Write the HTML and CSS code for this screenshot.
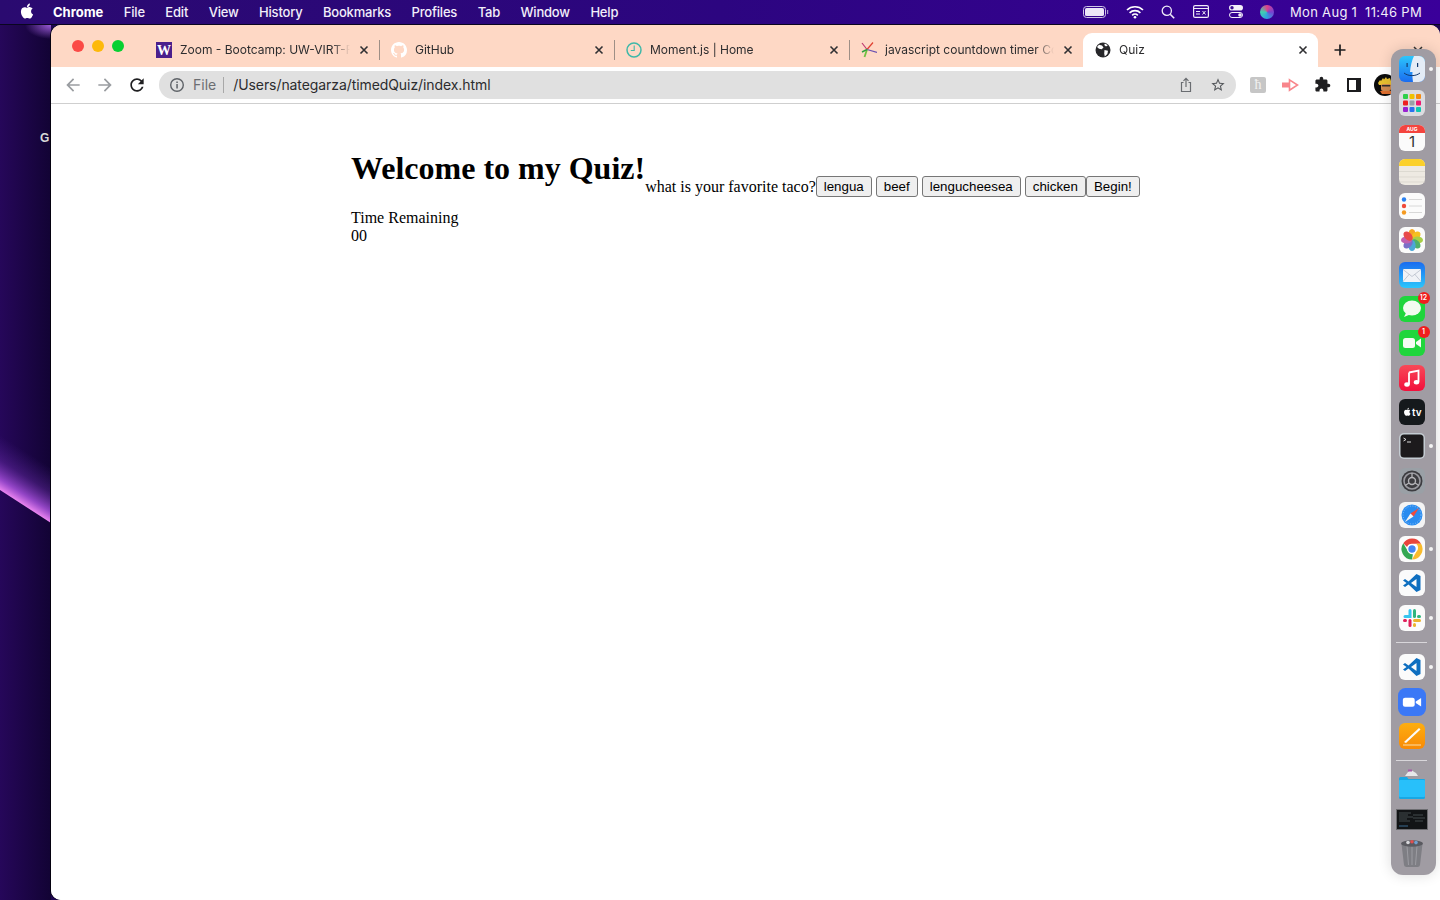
FILE: index.html
```html
<!DOCTYPE html>
<html>
<head>
  <title>Quiz</title>
  <link rel="stylesheet" href="styles.css">
</head>
<body>

  <header class="menubar">
    <svg class="apple" viewBox="0 0 24 24"><path fill="#fff" d="M18.71 19.5c-.83 1.24-1.71 2.45-3.05 2.47-1.34.03-1.77-.79-3.29-.79-1.53 0-2 .77-3.27.82-1.31.05-2.3-1.32-3.14-2.53C4.25 17 2.94 12.45 4.7 9.39c.87-1.52 2.43-2.48 4.12-2.51 1.28-.02 2.5.87 3.29.87.78 0 2.26-1.07 3.81-.91.65.03 2.47.26 3.64 1.98-.09.06-2.17 1.28-2.15 3.81.03 3.02 2.65 4.03 2.68 4.04-.03.07-.42 1.44-1.38 2.83M13 3.5c.73-.83 1.94-1.46 2.94-1.5.13 1.17-.34 2.35-1.04 3.19-.69.85-1.83 1.51-2.95 1.42-.15-1.15.41-2.35 1.05-3.11z"/></svg>
    <nav class="menus">
      <span class="app-name">Chrome</span>
      <span>File</span>
      <span>Edit</span>
      <span>View</span>
      <span>History</span>
      <span>Bookmarks</span>
      <span>Profiles</span>
      <span>Tab</span>
      <span>Window</span>
      <span>Help</span>
    </nav>
    <div class="status">
      <svg class="st-battery" width="26" height="12" viewBox="0 0 26 12"><rect x=".5" y=".5" width="22" height="11" rx="3" fill="none" stroke="#cfc6e6"/><rect x="2" y="2" width="19" height="8" rx="1.6" fill="#ece6f8"/><rect x="24" y="4" width="1.2" height="4" fill="#a99bd0"/></svg>
      <svg class="st-wifi" width="18" height="14" viewBox="0 0 18 14"><path d="M1 5a11.5 11.5 0 0 1 16 0M3.6 7.800a7.800 7.800 0 0 1 10.800 0M6.200 10.300a4 4 0 0 1 5.600 0" fill="none" stroke="#fff" stroke-width="1.7"/><circle cx="9" cy="12.300" r="1.300" fill="#fff"/></svg>
      <svg class="st-search" width="14" height="14" viewBox="0 0 14 14"><circle cx="5.800" cy="5.800" r="4.600" fill="none" stroke="#f0ecf8" stroke-width="1.3"/><path d="M9.200 9.200l4 4" stroke="#f0ecf8" stroke-width="1.6"/></svg>
      <svg class="st-display" width="16" height="13" viewBox="0 0 16 13"><rect x=".6" y=".6" width="14.800" height="11.800" rx="1.5" fill="none" stroke="#f0ecf8" stroke-width="1.2"/><path d="M1 3.500h14" stroke="#f0ecf8"/><path d="M3 6.500h4M3 9h4M9.500 6l3 3.500M12.500 6l-3 3.500" stroke="#f0ecf8"/></svg>
      <svg class="st-control" width="14" height="13" viewBox="0 0 14 13"><rect x="0" y="0" width="14" height="5.600" rx="2.800" fill="#f4f0fa"/><circle cx="3" cy="2.800" r="1.700" fill="#3a0a90"/><rect x=".5" y="7.500" width="13" height="5" rx="2.5" fill="none" stroke="#f4f0fa"/><circle cx="11" cy="10" r="1.800" fill="#f4f0fa"/></svg>
      <span class="st-siri"></span>
      <span class="clock">Mon Aug 1&nbsp;&nbsp;11:46 PM</span>
    </div>
  </header>

  <div class="desktop">
    <aside class="wallpaper">
      <svg width="51" height="875" viewBox="0 0 51 875">
        <defs>
          <linearGradient id="streak" gradientUnits="userSpaceOnUse" x1="25" y1="481" x2="50" y2="442">
            <stop offset="0" stop-color="#ea84f0"/>
            <stop offset="0.2" stop-color="#a850dc" stop-opacity="0.85"/>
            <stop offset="0.55" stop-color="#7030b0" stop-opacity="0.4"/>
            <stop offset="1" stop-color="#5a2aa0" stop-opacity="0"/>
          </linearGradient>
          <radialGradient id="corner" cx="1" cy="0" r="1">
            <stop offset="0" stop-color="#9a5ad8"/>
            <stop offset="1" stop-color="#9a5ad8" stop-opacity="0"/>
          </radialGradient>
        </defs>
        <rect x="25" y="0" width="26" height="14" fill="url(#corner)"/>
        <polygon points="0,400 51,430 51,498 0,465" fill="url(#streak)"/>
        <text class="desk-label" x="40" y="117">G</text>
      </svg>
    </aside>

    <div class="window">
      <div class="tabstrip">
        <div class="lights">
          <span class="light red"></span>
          <span class="light yellow"></span>
          <span class="light green"></span>
        </div>

        <div class="tab">
          <svg class="favicon" viewBox="0 0 16 16"><rect width="16" height="16" fill="#4b1f8c"/><text class="fav-w" x="8" y="13">W</text></svg>
          <span class="tab-title">Zoom - Bootcamp: UW-VIRT-F</span>
          <svg class="tab-close" viewBox="0 0 12 12"><path d="M2.500 2.500l7 7M9.500 2.500l-7 7"/></svg>
        </div>
        <span class="tab-sep"></span>
        <div class="tab">
          <svg class="favicon" viewBox="0 0 16 16"><path fill="#fff" d="M8 0C3.580 0 0 3.580 0 8c0 3.540 2.290 6.530 5.470 7.590.4.070.55-.17.55-.38 0-.19-.01-.82-.01-1.490-2.010.37-2.530-.49-2.690-.94-.09-.23-.48-.94-.82-1.130-.28-.15-.68-.52-.01-.53.63-.01 1.080.58 1.230.82.72 1.210 1.870.87 2.330.66.07-.52.28-.87.51-1.070-1.780-.2-3.640-.89-3.640-3.950 0-.87.31-1.590.82-2.150-.08-.2-.36-1.020.08-2.120 0 0 .67-.21 2.200.82.64-.18 1.320-.27 2-.27.68 0 1.360.09 2 .27 1.530-1.040 2.200-.82 2.200-.82.44 1.100.16 1.920.08 2.120.51.56.82 1.270.82 2.150 0 3.070-1.870 3.750-3.650 3.950.29.25.54.73.54 1.480 0 1.070-.01 1.930-.01 2.200 0 .21.15.46.55.38A8.013 8.013 0 0016 8c0-4.420-3.580-8-8-8z"/></svg>
          <span class="tab-title">GitHub</span>
          <svg class="tab-close" viewBox="0 0 12 12"><path d="M2.500 2.500l7 7M9.500 2.500l-7 7"/></svg>
        </div>
        <span class="tab-sep"></span>
        <div class="tab">
          <svg class="favicon" viewBox="0 0 16 16"><circle cx="8" cy="8" r="7" fill="none" stroke="#3fb8a8" stroke-width="1.5"/><path d="M8.200 3.500v5H4.800" fill="none" stroke="#3fb8a8" stroke-width="1.1"/></svg>
          <span class="tab-title">Moment.js | Home</span>
          <svg class="tab-close" viewBox="0 0 12 12"><path d="M2.500 2.500l7 7M9.500 2.500l-7 7"/></svg>
        </div>
        <span class="tab-sep"></span>
        <div class="tab tab-narrow">
          <svg class="favicon" viewBox="0 0 16 16"><path d="M6 7.500L1 1" stroke="#c03a70" stroke-width="1.2"/><path d="M6 7.500L12 0.500" stroke="#e04030" stroke-width="1.2"/><path d="M6 7.500L16 10.500" stroke="#6a50b0" stroke-width="1.2"/><path d="M6 7.500L3.500 15" stroke="#70c040" stroke-width="1.8"/><path d="M6 7.500L1 10" stroke="#30a040" stroke-width="1.5"/></svg>
          <span class="tab-title">javascript countdown timer Cc</span>
          <svg class="tab-close" viewBox="0 0 12 12"><path d="M2.500 2.500l7 7M9.500 2.500l-7 7"/></svg>
        </div>
        <div class="tab tab-active">
          <svg class="favicon" viewBox="0 0 16 16"><circle cx="8" cy="8" r="7.5" fill="#27272a"/><path d="M4 2.800l3 .7 1.500 2-1.800 1.800-2.700-.6L2 5zM9.500 8l3.500.7-.6 3.300-2.600 2.500-.6-3zM10 1.500l2.800 1.700-1.800 1.300-1.800-1.500z" fill="#fff"/></svg>
          <span class="tab-title">Quiz</span>
          <svg class="tab-close" viewBox="0 0 12 12"><path d="M2.500 2.500l7 7M9.500 2.500l-7 7"/></svg>
        </div>
        <svg class="new-tab" viewBox="0 0 12 12"><path d="M6 .5v11M.5 6h11"/></svg>
        <svg class="tab-search" viewBox="0 0 10 6"><path d="M1 1l4 4 4-4"/></svg>
      </div>

      <div class="toolbar">
        <button class="tool"><svg class="ic-grey" viewBox="0 0 24 24"><path d="M20 11H7.830l5.590-5.590L12 4l-8 8 8 8 1.410-1.410L7.830 13H20v-2z"/></svg></button>
        <button class="tool"><svg class="ic-grey flip" viewBox="0 0 24 24"><path d="M20 11H7.830l5.590-5.590L12 4l-8 8 8 8 1.410-1.410L7.830 13H20v-2z"/></svg></button>
        <button class="tool"><svg class="ic-dark" viewBox="0 0 24 24"><path d="M17.650 6.350C16.200 4.900 14.210 4 12 4c-4.420 0-7.990 3.580-7.990 8s3.570 8 7.990 8c3.730 0 6.840-2.550 7.730-6h-2.080c-.82 2.330-3.040 4-5.650 4-3.310 0-6-2.690-6-6s2.690-6 6-6c1.660 0 3.140.69 4.220 1.780L13 11h7V4l-2.350 2.350z"/></svg></button>

        <div class="omnibox">
          <svg class="info" viewBox="0 0 16 16"><circle cx="8" cy="8" r="6.300" fill="none" stroke="#5f6368" stroke-width="1.4"/><rect x="7.300" y="7" width="1.500" height="4.500" fill="#5f6368"/><rect x="7.300" y="4.500" width="1.500" height="1.500" fill="#5f6368"/></svg>
          <span class="scheme">File</span>
          <span class="omni-sep"></span>
          <span class="url">/Users/nategarza/timedQuiz/index.html</span>
          <div class="omni-actions">
            <svg class="share" viewBox="0 0 16 16"><path d="M5.500 5.500H3.500v9h9v-9h-2M8 10V1.500M5.500 3.800L8 1.300l2.500 2.500" fill="none" stroke="#6a6d71" stroke-width="1.2"/></svg>
            <svg class="star" viewBox="0 0 24 24"><path fill="#55585c" d="M22 9.240l-7.190-.62L12 2 9.190 8.630 2 9.240l5.460 4.730L5.820 21 12 17.270 18.180 21l-1.630-7.030L22 9.240zM12 15.400l-3.760 2.270 1-4.280-3.320-2.880 4.380-.38L12 6.100l1.710 4.040 4.380.38-3.320 2.880 1 4.280L12 15.400z"/></svg>
          </div>
        </div>

        <div class="extensions">
          <span class="ext"><span class="ext-k">ħ</span></span>
          <span class="ext"><svg width="18" height="14" viewBox="0 0 18 14"><path d="M8.500 1.800L16.500 7l-8 5.200z" fill="none" stroke="#f8868c" stroke-width="1.6"/><rect x="1" y="4.500" width="8" height="5" fill="#f8868c"/></svg></span>
          <span class="ext"><svg class="ic-dark" viewBox="0 0 24 24"><path d="M20.500 11H19V7c0-1.100-.9-2-2-2h-4V3.500C13 2.120 11.880 1 10.500 1S8 2.120 8 3.500V5H4c-1.100 0-1.990.9-1.990 2v3.800H3.500c1.490 0 2.700 1.210 2.700 2.700s-1.210 2.700-2.700 2.700H2V20c0 1.100.9 2 2 2h3.800v-1.500c0-1.490 1.210-2.700 2.700-2.700 1.490 0 2.700 1.210 2.700 2.700V22H17c1.100 0 2-.9 2-2v-4h1.500c1.380 0 2.500-1.120 2.500-2.500S21.880 11 20.500 11z"/></svg></span>
          <span class="ext"><svg width="14" height="14" viewBox="0 0 14 14"><rect x="1" y="1" width="12" height="12" fill="#fff" stroke="#1c1c1e" stroke-width="2"/><rect x="9" y="1" width="4" height="12" fill="#1c1c1e"/></svg></span>
          <span class="avatar"><svg width="22" height="22" viewBox="0 0 22 22"><circle cx="11" cy="11" r="11" fill="#0b0b0b"/><path d="M4 9l2-3 1 1 2-3 1 1.500L12 3l1 2 3-1 1 3 2 1-1 3H5z" fill="#e8c030"/><rect x="7" y="10" width="10" height="7" rx="2" fill="#d08a50"/><rect x="8" y="11" width="8" height="1.500" fill="#30302e"/><path d="M6 17h12l-1 3H8z" fill="#e07030"/></svg></span>
        </div>
      </div>

      <main class="page">
        <div class="quiz-head">
          <h1>Welcome to my Quiz!</h1>
          <div class="question">
            <span>what is your favorite taco?</span>
            <div class="answers">
              <button class="answer">lengua</button>
              <button class="answer">beef</button>
              <button class="answer">lengucheesea</button>
              <button class="answer">chicken</button>
            </div>
            <button class="answer">Begin!</button>
          </div>
        </div>
        <div class="timer">Time Remaining</div>
        <div class="timer">00</div>
      </main>
    </div>
  </div>

  <div class="dock">
    <!-- finder -->
    <div class="dock-item running"><svg viewBox="0 0 26 26"><defs><linearGradient id="fBlue" x1="0" y1="0" x2="0" y2="1"><stop offset="0" stop-color="#2cc6fb"/><stop offset="1" stop-color="#1a6cf0"/></linearGradient></defs><rect width="26" height="26" rx="6" fill="url(#fBlue)"/><path d="M15 0h5a6 6 0 0 1 6 6v14a6 6 0 0 1-6 6h-6c-.5-4-.8-7-.5-10H11C11.500 10 13 4 15 0z" fill="#e4ecf6"/><path d="M5 17c4.500 3.500 11.500 3.500 16 0" fill="none" stroke="#123a70" stroke-width="1"/><rect x="7.500" y="7" width="1.200" height="4" fill="#123a70"/><rect x="18" y="7" width="1.200" height="4" fill="#123a70"/></svg></div>
    <!-- launchpad -->
    <div class="dock-item"><svg viewBox="0 0 26 26"><rect width="26" height="26" rx="6" fill="#dcdce0"/><rect x="4" y="4" width="5" height="5" rx="1" fill="#2ed04a"/><rect x="10.500" y="4" width="5" height="5" rx="1" fill="#f0c000"/><rect x="17" y="4" width="5" height="5" rx="1" fill="#f58a10"/><rect x="4" y="10.500" width="5" height="5" rx="1" fill="#ee2020"/><rect x="10.500" y="10.500" width="5" height="5" rx="1" fill="#9aa0a8"/><rect x="17" y="10.500" width="5" height="5" rx="1" fill="#ee1a70"/><rect x="4" y="17" width="5" height="5" rx="1" fill="#9a20d0"/><rect x="10.500" y="17" width="5" height="5" rx="1" fill="#2a70f0"/><rect x="17" y="17" width="5" height="5" rx="1" fill="#10c8b0"/></svg></div>
    <!-- calendar -->
    <div class="dock-item"><svg viewBox="0 0 26 26"><rect width="26" height="26" rx="6" fill="#fbfbfb"/><path d="M0 8V6a6 6 0 0 1 6-6h14a6 6 0 0 1 6 6v2z" fill="#f4443e"/><text class="cal-month" x="13" y="6.200">AUG</text><text class="cal-day" x="13" y="22">1</text></svg></div>
    <!-- notes -->
    <div class="dock-item"><svg viewBox="0 0 26 26"><rect width="26" height="26" rx="6" fill="#eeeae2"/><path d="M0 7V6a6 6 0 0 1 6-6h14a6 6 0 0 1 6 6v1z" fill="#fbd02a"/><path d="M0 12.500h26M0 18h26M0 23h26" stroke="#d6d2ca" stroke-width=".7"/></svg></div>
    <!-- reminders -->
    <div class="dock-item"><svg viewBox="0 0 26 26"><rect width="26" height="26" rx="6" fill="#fbfbfb"/><circle cx="5" cy="6.500" r="2.200" fill="#2a80f0"/><circle cx="5" cy="13" r="2.200" fill="#f04a3a"/><circle cx="5" cy="19.500" r="2.200" fill="#f59a20"/><path d="M10 6.500h13M10 13h13M10 19.500h13" stroke="#d8d8d8"/></svg></div>
    <!-- photos -->
    <div class="dock-item"><svg viewBox="0 0 26 26"><rect width="26" height="26" rx="6" fill="#fbfbfb"/><g><ellipse cx="13" cy="7.500" rx="3.600" ry="5.500" fill="#f5a623"/><ellipse cx="13" cy="7.500" rx="3.600" ry="5.500" fill="#f5c020" transform="rotate(45 13 13)"/><ellipse cx="13" cy="7.500" rx="3.600" ry="5.500" fill="#a8cf45" transform="rotate(90 13 13)"/><ellipse cx="13" cy="7.500" rx="3.600" ry="5.500" fill="#4fb06a" transform="rotate(135 13 13)"/><ellipse cx="13" cy="7.500" rx="3.600" ry="5.500" fill="#4aa8d8" transform="rotate(180 13 13)"/><ellipse cx="13" cy="7.500" rx="3.600" ry="5.500" fill="#7a70c8" transform="rotate(225 13 13)"/><ellipse cx="13" cy="7.500" rx="3.600" ry="5.500" fill="#c060b0" transform="rotate(270 13 13)"/><ellipse cx="13" cy="7.500" rx="3.600" ry="5.500" fill="#e84a4a" transform="rotate(315 13 13)"/></g></svg></div>
    <!-- mail -->
    <div class="dock-item"><svg viewBox="0 0 26 26"><defs><linearGradient id="mBlue" x1="0" y1="0" x2="0" y2="1"><stop offset="0" stop-color="#1a6cf0"/><stop offset="1" stop-color="#2cc6fb"/></linearGradient></defs><rect width="26" height="26" rx="6" fill="url(#mBlue)"/><rect x="4" y="7" width="18" height="13" rx="1" fill="#f0f2f6"/><path d="M4 7.500l9 7 9-7M4 19.500l6.500-7.500M22 19.500L15.500 12" fill="none" stroke="#b0b8c4" stroke-width=".7"/></svg></div>
    <!-- messages -->
    <div class="dock-item"><svg viewBox="0 0 26 26"><rect width="26" height="26" rx="6" fill="#1fd63c"/><ellipse cx="13" cy="12" rx="9" ry="7.500" fill="#f2fbf0"/><path d="M7 17l-2 4 6-2.500z" fill="#f2fbf0"/></svg><span class="badge">12</span></div>
    <!-- facetime -->
    <div class="dock-item"><svg viewBox="0 0 26 26"><rect width="26" height="26" rx="6" fill="#1fd63c"/><rect x="4" y="8" width="12" height="10" rx="2.500" fill="#f4fbf2"/><path d="M17 12l5-3.500v9L17 14z" fill="#f4fbf2"/></svg><span class="badge">1</span></div>
    <!-- music -->
    <div class="dock-item"><svg viewBox="0 0 26 26"><defs><linearGradient id="mRed" x1="0" y1="0" x2="0" y2="1"><stop offset="0" stop-color="#f84a58"/><stop offset="1" stop-color="#f2103c"/></linearGradient></defs><rect width="26" height="26" rx="6" fill="url(#mRed)"/><path d="M10 7.500L19.500 5.500V17M10 7.500V19.500" fill="none" stroke="#fff" stroke-width="1.8"/><ellipse cx="8" cy="19.500" rx="2.700" ry="2.200" fill="#fff"/><ellipse cx="17.500" cy="17.300" rx="2.700" ry="2.200" fill="#fff"/></svg></div>
    <!-- apple tv -->
    <div class="dock-item"><svg viewBox="0 0 26 26"><rect width="26" height="26" rx="6" fill="#15191c"/><g transform="translate(3.500 8) scale(.4)"><path fill="#fff" d="M18.710 19.500c-.83 1.240-1.710 2.450-3.050 2.470-1.340.03-1.770-.79-3.290-.79-1.530 0-2 .77-3.270.82-1.310.05-2.300-1.320-3.140-2.530C4.250 17 2.940 12.450 4.700 9.390c.87-1.520 2.430-2.480 4.120-2.510 1.280-.02 2.500.87 3.290.87.780 0 2.260-1.070 3.810-.91.650.03 2.470.26 3.640 1.980-.09.06-2.170 1.280-2.150 3.810.03 3.020 2.650 4.030 2.680 4.040-.03.07-.42 1.440-1.380 2.830M13 3.500c.73-.83 1.940-1.460 2.940-1.500.13 1.170-.34 2.350-1.040 3.190-.69.85-1.830 1.510-2.950 1.420-.15-1.150.41-2.350 1.050-3.110z"/></g><text class="tv" x="13" y="17">tv</text></svg></div>
    <!-- terminal -->
    <div class="dock-item running"><svg viewBox="0 0 26 26"><rect width="26" height="26" rx="5" fill="#c4ccd2"/><rect x="1.500" y="1.500" width="23" height="23" rx="3.500" fill="#1c1a1c"/><path d="M4.500 5l2.500 1.500L4.500 8M8 9h4" fill="none" stroke="#f0f0f0" stroke-width=".9"/></svg></div>
    <!-- system preferences -->
    <div class="dock-item"><svg viewBox="0 0 26 26"><rect width="26" height="26" rx="6" fill="#9aa0a6"/><circle cx="13" cy="13" r="10.500" fill="#3c3c40"/><circle cx="13" cy="13" r="8" fill="none" stroke="#9a9aa0" stroke-width="1.6"/><circle cx="13" cy="13" r="3.500" fill="none" stroke="#b4b4b8" stroke-width="1.4"/><path d="M13 9.500V5M10 15l-4 2.500M16 15l4 2.500" stroke="#b4b4b8" stroke-width="1.3"/></svg></div>
    <!-- safari -->
    <div class="dock-item"><svg viewBox="0 0 26 26"><rect width="26" height="26" rx="6" fill="#f4f4f4"/><circle cx="13" cy="13" r="10.500" fill="#2a8cf0"/><circle cx="13" cy="13" r="9" fill="none" stroke="#9ccbf8" stroke-width=".8" stroke-dasharray="1 1.500"/><path d="M20 6l-8.500 5.500L14.500 14.500z" fill="#f04a3a"/><path d="M6 20l5.500-8.500L14.500 14.500z" fill="#f4f4f4"/></svg></div>
    <!-- chrome -->
    <div class="dock-item running"><svg viewBox="0 0 26 26"><rect width="26" height="26" rx="6" fill="#fbfbfb"/><path d="M13 2.500a10.500 10.500 0 0 1 9.100 5.250H13a5.250 5.250 0 0 0-4.900 3.300L4.300 7.200A10.500 10.500 0 0 1 13 2.500z" fill="#e8453c"/><path d="M22.100 7.750A10.500 10.500 0 0 1 13 23.500l4.500-7.900a5.250 5.250 0 0 0-.3-7.850z" fill="#f9bb2d"/><path d="M13 23.500A10.500 10.500 0 0 1 4.300 7.200l4.600 8a5.250 5.250 0 0 0 5 3z" fill="#34a853"/><circle cx="13" cy="13" r="4.300" fill="#4285f4" stroke="#fff" stroke-width="1.2"/></svg></div>
    <!-- vs code -->
    <div class="dock-item"><svg viewBox="0 0 26 26"><rect width="26" height="26" rx="6" fill="#fbfbfb"/><path d="M17.500 4L9.500 11.500 6 9 4 10.500 7.500 13 4 15.500 6 17 9.500 14.500 17.500 22 21.500 20V6zM17.500 9v8L12 13z" fill="#0f6fc0" fill-rule="evenodd"/></svg></div>
    <!-- slack -->
    <div class="dock-item running"><svg viewBox="0 0 26 26"><rect width="26" height="26" rx="6" fill="#fbfbfb"/><g fill="none" stroke-width="3" stroke-linecap="round"><path d="M11 5.500v6H6" stroke="#36c5f0"/><path d="M15.500 5.500v6" stroke="#2eb67d"/><path d="M20.500 11.500h-1" stroke="#2eb67d"/><path d="M20.500 15.500h-5" stroke="#ecb22e"/><path d="M15.500 20.500v-1" stroke="#ecb22e"/><path d="M11 20.500v-5" stroke="#e01e5a"/><path d="M5.500 15.500h1" stroke="#e01e5a"/></g></svg></div>

    <span class="dock-sep"></span>

    <div class="dock-item running"><svg viewBox="0 0 26 26"><rect width="26" height="26" rx="6" fill="#fbfbfb"/><path d="M17.500 4L9.500 11.500 6 9 4 10.500 7.500 13 4 15.500 6 17 9.500 14.500 17.500 22 21.500 20V6zM17.500 9v8L12 13z" fill="#0f6fc0" fill-rule="evenodd"/></svg></div>
    <!-- zoom -->
    <div class="dock-item"><svg viewBox="0 0 26 26" class="dock-big"><rect width="26" height="26" rx="7" fill="#3b78f6"/><rect x="4.500" y="9" width="11" height="8.500" rx="2" fill="#fff"/><path d="M16.500 12.500l5-3.300v8l-5-3.300z" fill="#fff"/></svg></div>
    <!-- pages -->
    <div class="dock-item"><svg viewBox="0 0 26 26"><defs><linearGradient id="pOrange" x1="0" y1="0" x2="0" y2="1"><stop offset="0" stop-color="#fdae10"/><stop offset="1" stop-color="#f88a06"/></linearGradient></defs><rect width="26" height="26" rx="6" fill="url(#pOrange)"/><path d="M5 19L20 5l1.500 1.500L7 20z" fill="#fbfbfb"/><path d="M4 22h18" stroke="#fbd090" stroke-width="1.2"/></svg></div>

    <span class="dock-sep"></span>

    <!-- downloads folder -->
    <div class="dock-item"><svg viewBox="0 -4 26 30" class="dock-folder"><path d="M6 3l3-4 3-2 5 3 2 3z" fill="#e8e8ea"/><rect x="9" y="-3.500" width="4" height="2" fill="#a85aa8"/><path d="M0 5.500A1.500 1.500 0 0 1 1.500 4H8l1.500 2H25a1 1 0 0 1 1 1v17.500a1.500 1.500 0 0 1-1.500 1.500h-23A1.500 1.500 0 0 1 0 24.500z" fill="#18a8e4"/><rect y="7" width="26" height="17" rx="1" fill="#28c0fa"/></svg></div>
    <!-- screenshot stack -->
    <div class="dock-item dock-shot"><svg width="32" height="21" viewBox="0 0 32 21"><rect width="32" height="21" fill="#121416"/><rect x=".5" y=".5" width="31" height="20" fill="none" stroke="#6c6c70"/><path d="M3 4h12M3 6h9M3 8h14M3 10h8M3 12h11M17 6h10M17 9h12M19 12h8" stroke="#50585c" stroke-width=".8"/><path d="M3 17h9" stroke="#3a6a90"/></svg></div>
    <!-- trash -->
    <div class="dock-item"><svg viewBox="0 0 26 30" class="dock-tall"><path d="M2.500 6h21l-2.500 21q-.3 2-2.500 2h-11q-2.200 0-2.500-2z" fill="#7e7e84"/><path d="M8 8l1.500 19M13 8v19M18 8l-1.500 19" stroke="#9c9ca2" stroke-width="1"/><ellipse cx="13" cy="5.500" rx="11" ry="3.200" fill="#5a5a60"/><circle cx="9" cy="4.500" r="1.800" fill="#d8d8dc"/><circle cx="13" cy="3.800" r="1.800" fill="#e05050"/><circle cx="17" cy="4.600" r="1.800" fill="#70a0d0"/></svg></div>
  </div>

</body>
</html>
```

FILE: styles.css
```css
* {
  box-sizing: border-box;
}

html, body {
  margin: 0;
  height: 900px;
  overflow: hidden;
}

body {
  position: relative;
  display: flex;
  flex-direction: column;
  background: #1e0650;
  font-family: Inter, "Liberation Sans", sans-serif;
}

/* mac menu bar */
.menubar {
  display: flex;
  align-items: center;
  height: 25px;
  flex: 0 0 25px;
  padding: 0 18px 1px 18px;
  border-bottom: 1px solid #0a0520;
  background: linear-gradient(90deg, #2a0a70, #2c0580 50%, #3a009a);
  color: #f2eefa;
  font-size: 13px;
  font-weight: 500;
}

.apple {
  width: 18px;
  height: 18px;
  margin-bottom: 1px;
}

.menus {
  display: flex;
  gap: 20.5px;
  margin-left: 17px;
  letter-spacing: -0.2px;
}

.app-name {
  font-weight: 700;
  color: #fff;
  letter-spacing: 0;
}

.status {
  display: flex;
  align-items: center;
  margin-left: auto;
}

.st-wifi { margin-left: 17px; }
.st-search { margin-left: 17px; }
.st-display { margin-left: 18px; }
.st-control { margin-left: 20px; }

.st-siri {
  width: 14px;
  height: 14px;
  margin-left: 17px;
  border-radius: 50%;
  background: conic-gradient(#e0408a, #7a40d0, #30a0e0, #40d0b0, #e0408a);
}

.clock {
  margin-left: 16px;
  font-weight: 400;
  letter-spacing: 0.3px;
}

.desktop {
  display: flex;
  flex: 1;
  min-height: 0;
}

/* left sliver of wallpaper */
.wallpaper {
  flex: 0 0 51px;
  background: linear-gradient(90deg, #26075a, #120334);
}

.wallpaper svg {
  display: block;
}

.desk-label {
  font-family: "Liberation Sans", sans-serif;
  font-size: 12px;
  font-weight: 700;
  fill: #d8d8d8;
}

/* browser window */
.window {
  flex: 1;
  min-width: 0;
  display: flex;
  flex-direction: column;
  overflow: hidden;
  background: #fff;
  border-radius: 10px 10px 0 10px;
  box-shadow: -1px 0 0 #05010f;
}

.tabstrip {
  display: flex;
  align-items: flex-end;
  flex: 0 0 42px;
  background: #fed8c5;
  color: #2d2d2f;
}

.lights {
  display: flex;
  align-self: flex-start;
  gap: 8px;
  width: 94px;
  padding: 15px 0 0 21px;
}

.light {
  width: 12px;
  height: 12px;
  border-radius: 50%;
}

.red { background: #fb4a46; }
.yellow { background: #fdb90a; }
.green { background: #07d032; }

.tab {
  display: flex;
  align-items: center;
  width: 234px;
  height: 34px;
  padding: 0 9px 0 11px;
  font-size: 12px;
}

.tab-narrow {
  width: 233px;
}

.tab-active {
  width: 235px;
  padding-left: 12px;
  background: #fff;
  border-radius: 9px 9px 0 0;
}

.favicon {
  flex: 0 0 16px;
  width: 16px;
  height: 16px;
}

.fav-w {
  font-family: "Liberation Serif", serif;
  font-size: 14px;
  font-weight: 700;
  fill: #fff;
  text-anchor: middle;
}

/* long titles fade out just before the close button */
.tab-title {
  flex: 1;
  min-width: 0;
  margin: 0 4px 0 8px;
  padding-bottom: 2px;
  white-space: nowrap;
  overflow: hidden;
  -webkit-mask-image: linear-gradient(90deg, #000 calc(100% - 22px), transparent calc(100% - 4px));
  mask-image: linear-gradient(90deg, #000 calc(100% - 22px), transparent calc(100% - 4px));
}

.tab-close {
  flex: 0 0 12px;
  width: 12px;
  height: 12px;
  fill: none;
  stroke: #303033;
  stroke-width: 1.6;
}

.tab-sep {
  flex: 0 0 1px;
  height: 20px;
  margin-bottom: 7px;
  background: #9e8f86;
}

.new-tab {
  width: 12px;
  height: 12px;
  margin: 0 0 11px 16px;
  fill: none;
  stroke: #1d1d1f;
  stroke-width: 1.7;
}

.tab-search {
  width: 10px;
  height: 6px;
  margin: 0 0 15px 67px;
  fill: none;
  stroke: #333;
  stroke-width: 1.5;
}

/* address bar row */
.toolbar {
  display: flex;
  align-items: center;
  flex: 0 0 37px;
  padding: 0 0 1px 6px;
  border-bottom: 1px solid #cfcfcf;
  background: #fff;
}

.tool {
  display: flex;
  align-items: center;
  justify-content: center;
  width: 32px;
  height: 28px;
  padding: 0;
  border: none;
  background: none;
}

.tool svg {
  width: 20px;
  height: 20px;
}

.ic-grey { fill: #9a9da1; }
.ic-dark { fill: #1f1f21; }
.flip { transform: scaleX(-1); }

.omnibox {
  display: flex;
  align-items: center;
  flex: 0 0 1077px;
  height: 28px;
  margin-left: 6px;
  padding: 0 10px;
  border-radius: 14px;
  background: #e0e0e0;
}

.info {
  width: 16px;
  height: 16px;
}

.scheme {
  margin-left: 8px;
  font-size: 14px;
  color: #6c6e72;
}

.omni-sep {
  width: 1px;
  height: 16px;
  margin: 0 9px 0 7px;
  background: #a8a8a8;
}

.url {
  font-size: 14px;
  letter-spacing: -0.08px;
  color: #2c2c2e;
}

.omni-actions {
  display: flex;
  align-items: center;
  gap: 16px;
  margin-left: auto;
}

.share {
  width: 16px;
  height: 16px;
}

.star {
  width: 16px;
  height: 16px;
}

.extensions {
  display: flex;
  align-items: center;
  margin-left: 6px;
}

.ext {
  display: flex;
  align-items: center;
  justify-content: center;
  width: 32px;
}

.ext > svg.ic-dark {
  width: 17px;
  height: 17px;
}

.ext-k {
  width: 16px;
  height: 16px;
  border-radius: 2px;
  background: #c6c6c6;
  color: #f2f2f2;
  font-family: "Liberation Serif", serif;
  font-size: 14px;
  line-height: 15px;
  text-align: center;
}

.avatar {
  display: block;
  width: 22px;
  height: 22px;
  margin-left: 4px;
}

/* the quiz page itself */
.page {
  flex: 1;
  padding: 46px 0 0 300px;
  background: #fff;
  color: #000;
  font-family: "Liberation Serif", serif;
  font-size: 16px;
  line-height: 18px;
}

.quiz-head {
  display: flex;
  align-items: flex-end;
  margin-bottom: 12px;
}

h1 {
  margin: 0 0 10px;
  font-size: 32px;
  line-height: 37px;
  font-weight: 700;
}

.question {
  display: flex;
  align-items: center;
  height: 21px;
}

.answers {
  display: flex;
  gap: 4px;
}

.answer {
  height: 21px;
  padding: 1px 7px;
  border: 1px solid #767676;
  border-radius: 3px;
  background: #efefef;
  color: #000;
  font-family: "Liberation Sans", sans-serif;
  font-size: 13.333px;
  line-height: 15px;
}

/* dock floats over the window */
.dock {
  position: absolute;
  top: 49px;
  right: 4px;
  width: 45px;
  height: 826px;
  display: flex;
  flex-direction: column;
  align-items: center;
  gap: 8.3px;
  padding: 7px 4px 0 0;
  border-radius: 12px;
  background: #a09ca3;
  box-shadow: 0 0 14px rgba(0, 0, 0, 0.14);
}

.dock-item {
  position: relative;
  flex: 0 0 26px;
  width: 26px;
  height: 26px;
}

.dock-item > svg {
  display: block;
  width: 26px;
  height: 26px;
}

.dock-item > svg.dock-big {
  width: 28px;
  height: 28px;
  margin: -1px;
}

.dock-item > svg.dock-tall {
  height: 30px;
  margin-top: -3px;
}

.dock-item > svg.dock-folder {
  height: 30px;
  margin-top: -4px;
  overflow: visible;
}

.dock-item.dock-shot > svg {
  width: 32px;
  height: 21px;
  margin: 2px -3px;
}

.running::after {
  content: "";
  position: absolute;
  top: 11px;
  left: 30px;
  width: 4px;
  height: 4px;
  border-radius: 50%;
  background: #f4f4f4;
}

.badge {
  position: absolute;
  top: -4px;
  right: -5px;
  min-width: 12px;
  height: 12px;
  padding: 0 2px;
  border-radius: 6px;
  background: #f01e1e;
  color: #fff;
  font-size: 7px;
  font-weight: 600;
  line-height: 12px;
  text-align: center;
}

.dock-sep {
  flex: 0 0 1px;
  width: 31px;
  margin: 3px 0;
  background: #d8d6da;
}

.cal-month {
  font-family: Inter, sans-serif;
  font-size: 5px;
  font-weight: 700;
  fill: #fff;
  text-anchor: middle;
}

.cal-day {
  font-family: Inter, sans-serif;
  font-size: 15px;
  fill: #333;
  text-anchor: middle;
}

.tv {
  font-family: Inter, sans-serif;
  font-size: 10px;
  font-weight: 600;
  fill: #fff;
}
```
